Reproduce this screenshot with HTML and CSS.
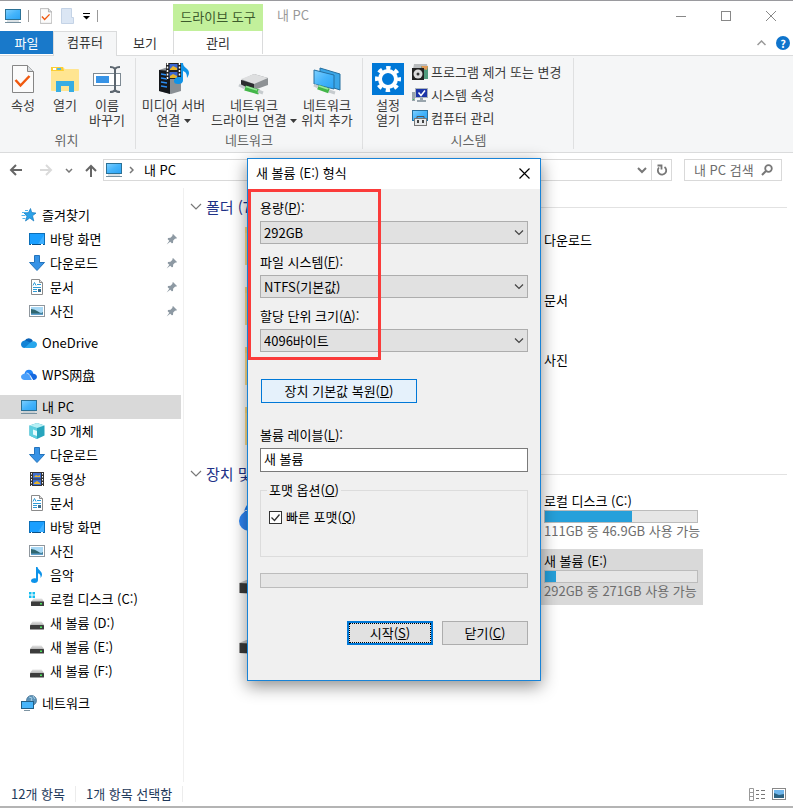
FILE: index.html
```html
<!DOCTYPE html>
<html lang="ko">
<head>
    <meta charset="UTF-8">
    <meta name="viewport" content="width=device-width, initial-scale=1.0">
    <title>내 PC</title>
    <link rel="stylesheet" href="styles.css">
</head>
<body>
    <!-- Shared icons -->
    <svg class="sprite" aria-hidden="true">
        <defs>
            <linearGradient id="screen" x1="0" y1="0" x2="1" y2="1">
                <stop offset="0" stop-color="#7fd0ff"/>
                <stop offset=".5" stop-color="#45b4fb"/>
                <stop offset="1" stop-color="#2aa3f5"/>
            </linearGradient>
            <linearGradient id="steel" x1="0" y1="0" x2="0" y2="1">
                <stop offset="0" stop-color="#e6e6e6"/>
                <stop offset="1" stop-color="#b5b5b5"/>
            </linearGradient>
        </defs>
        <symbol id="pc" viewBox="0 0 16 16">
            <rect x=".5" y="1.5" width="15" height="10" fill="url(#screen)" stroke="#2b7196"/>
            <path d="M2 13h12" stroke="#b7c4cc"/>
            <path d="M0 14.5h16" stroke="#76909f"/>
        </symbol>
        <symbol id="desktop" viewBox="0 0 16 16">
            <rect x=".5" y="2.5" width="15" height="11" fill="#1a9fff" stroke="#0b6fb8"/>
            <path d="M9 13L15 4v9z" fill="#3fb0ff"/>
            <path d="M1 13.5h14" stroke="#084f86"/>
            <path d="M2 13.5h1M12 13.5h2" stroke="#fff"/>
        </symbol>
        <symbol id="download" viewBox="0 0 16 16">
            <path d="M5.5 .5h5v7h5L8 15.5.5 7.5h5z" fill="#3793e6" stroke="#2474bd"/>
        </symbol>
        <symbol id="doc" viewBox="0 0 16 16">
            <path d="M2.500 .5h8l3 3v12h-11z" fill="#fff" stroke="#8b8b8b"/>
            <path d="M10.500 .5v3h3" fill="#ddd" stroke="#8b8b8b"/>
            <path d="M4 6.500l1.500-3 1.500 3M8 5.500h4M4 8.500h8M4 10.500h4M4 12.500h4" fill="none" stroke="#2e9bd6"/>
            <rect x="9" y="10" width="3" height="3" fill="#3a6c8c"/>
        </symbol>
        <symbol id="photo" viewBox="0 0 16 16">
            <rect x=".5" y="2.5" width="15" height="11" fill="#fff" stroke="#8f979e"/>
            <rect x="2" y="4" width="12" height="8" fill="#a8d8f5"/>
            <path d="M2 6q4 0 7 2.500t5 .5v3H2z" fill="#2f6670"/>
            <path d="M2 10.500h12V12H2z" fill="#5fa0cd"/>
        </symbol>
        <symbol id="film" viewBox="0 0 16 16">
            <rect x="1" y="1" width="14" height="14" fill="#333"/>
            <rect x="4" y="2" width="8" height="5.500" fill="#3f6fd0"/>
            <rect x="4" y="8.500" width="8" height="5.500" fill="#3f6fd0"/>
            <path d="M5 6l2-2 2 1 2-1v2zM5 12l3-2 3 2v1H5z" fill="#e7b52c"/>
            <path d="M2.500 2v13M13.500 2v13" stroke="#fff" stroke-dasharray="1.500 1.500"/>
        </symbol>
        <symbol id="cube" viewBox="0 0 16 16">
            <path d="M8 0l7.500 2.500v10L8 16 .5 12.500v-10z" fill="#27a5bd"/>
            <path d="M.5 2.500L8 5v11L.5 12.500z" fill="#5fd0e0"/>
            <path d="M8 0l7.500 2.500L8 5 .5 2.500z" fill="#b6f0f5"/>
            <path d="M4 6.500l4 1.500v5l-4-1.500z" fill="#e4fbfd"/>
        </symbol>
        <symbol id="note" viewBox="0 0 16 16">
            <path d="M7 0h1.500c.5 3 4.500 4 4.500 7.500 0 1.500-.7 2.500-1.500 3.500.5-3-.8-4-2.500-4.700V13c0 1.800-1.500 3-3.500 3S2 15 2 13.700s1.500-2.500 3.500-2.500c.6 0 1 .1 1.500.3z" fill="#0d93ea"/>
        </symbol>
        <symbol id="drive" viewBox="0 0 16 16">
            <path d="M3.500 6.500h9L15 10H1z" fill="url(#steel)"/>
            <rect x="1" y="10" width="14" height="4.500" rx=".5" fill="#3c3c3c"/>
            <rect x="11" y="11.500" width="2" height="1.500" fill="#4be35c"/>
        </symbol>
        <symbol id="sysdrive" viewBox="0 0 16 16">
            <path d="M4.500 7.500h8.500L15 11H2z" fill="url(#steel)"/>
            <rect x="2" y="10.500" width="13" height="4.500" rx=".5" fill="#3c3c3c"/>
            <rect x="11" y="12" width="2" height="1.500" fill="#4be35c"/>
            <path d="M0 1h2.500v2.500H0zM3.500 1H6v2.500H3.500zM0 4.500h2.500V7H0zM3.500 4.500H6V7H3.500z" fill="#13bdf0"/>
        </symbol>
        <symbol id="star" viewBox="0 0 16 16">
            <path d="M9.500 1.500l1.200 4 4.300.6-3.500 2.700 1.300 5.200-4-3-4.300 3L6 9 3 6l4.500-.4z" fill="#2ba2e8" stroke="#1579bd" stroke-width=".7"/>
            <path d="M1 5.500h4M.5 8.500h4M1.500 11.500h3M4 3.500h3" stroke="#4db5ee"/>
        </symbol>
        <symbol id="onedrive" viewBox="0 0 16 16">
            <path d="M3.500 6a4.700 4.700 0 018.500 0L8 11 2.500 9z" fill="#0a62b5"/>
            <path d="M3.500 5.500C1.500 5.800 0 7.500 0 9.300 0 11.500 1.500 13 3.500 13L12 9 6.500 6.200c-1-.6-2-.8-3-.7z" fill="#1183d6"/>
            <path d="M12.500 6.200c2 0 3.500 1.500 3.500 3.400S14.500 13 12.700 13H3.500L10 7z" fill="#27a6ec"/>
        </symbol>
        <symbol id="wps" viewBox="0 0 16 16">
            <path d="M3.500 7C3.800 4.300 5.600 2.800 8 2.800c2.300 0 4 1.600 4.200 4L8.500 9z" fill="#2286f7"/>
            <path d="M5 6.500c2.500 0 4 2.500 6 6.500H3.500C1.500 13 0 11.600 0 9.800 0 8 1.800 6.500 5 6.500z" fill="#4ba0fa"/>
            <path d="M8 7.500c1.500-1.500 7.500-1.500 8 2.300 0 2-1.500 3.200-3.300 3.200H12z" fill="#1468df"/>
            <path d="M5.500 6c2.500.5 4 2.500 6 7" fill="none" stroke="#fff" stroke-width=".8"/>
        </symbol>
        <symbol id="network" viewBox="0 0 16 16">
            <circle cx="10.500" cy="5.500" r="5" fill="#5d93b8" stroke="#3c6c8f" stroke-width=".7"/>
            <path d="M8 2l3 1-1 2.500 3 1.500M12 1l2 3" stroke="#a9cfe4" stroke-width="1" fill="none"/>
            <rect x=".5" y="6.500" width="12" height="7" fill="#47b5fa" stroke="#225f86"/>
            <path d="M3 15.500h6" stroke="#7e95a3"/>
        </symbol>
        <symbol id="pin" viewBox="0 0 12 12">
            <path d="M7 1l4 4-1 .8-.8-.2-2 2L7 10 5.800 10.300 1.700 6.200 2 5l2.500-.2 2-2L6.300 2zM3.500 7.500l1 1-3.800 3z" fill="#8d99a3"/>
        </symbol>
        <symbol id="folder" viewBox="0 0 48 48">
            <path d="M0 10h18l4 4h26v34H0z" fill="#ffd97a"/>
            <path d="M0 16h48v32H0z" fill="#ffdf8c"/>
        </symbol>
        <symbol id="bigdrive" viewBox="0 0 48 48">
            <path d="M0 34L10 30h36l2 5-40 2z" fill="#c4c4c4"/>
            <path d="M0 34l40 2 8-1v9l-8 2L0 44z" fill="#3a3a3a"/>
            <path d="M0 34v10" stroke="#999" stroke-width="2"/>
        </symbol>
        <symbol id="bigcloud" viewBox="0 0 48 48">
            <path d="M4 28C5 14 15 8 24 8s18 8 18 20z" fill="#1f7cf2"/>
            <circle cx="10" cy="32" r="10" fill="#2f86f3"/>
            <path d="M10 22h20l8 20H10z" fill="#4a9cf8"/>
            <path d="M1 25q5-5 12-4" fill="none" stroke="#fff"/>
        </symbol>
        <symbol id="checkdoc" viewBox="0 0 22 28">
            <path d="M.5 .5h15l6 6v21H.5z" fill="#fbfbfb" stroke="#868686"/>
            <path d="M15.500 .5v6h6" fill="#d9dde0" stroke="#868686"/>
            <path d="M3.500 15l5 5.500 9-9.500" fill="none" stroke="#f0590f" stroke-width="2.500"/>
        </symbol>
        <symbol id="caret" viewBox="0 0 7 4">
            <path d="M0 0h7L3.500 4z" fill="currentColor"/>
        </symbol>
    </svg>

    <div class="window">
        <!-- Title bar -->
        <header class="titlebar">
            <div class="quick-access">
                <svg class="icon"><use href="#pc"/></svg>
                <span class="bar"></span>
                <button class="qa-button" aria-label="속성"><svg width="12" height="16"><use href="#checkdoc"/></svg></button>
                <button class="qa-button" aria-label="새 폴더"><svg width="13" height="16"><path d="M.5 .5h10v9h2v6H.5z" fill="#dbe6f4" stroke="#c4d3e6"/></svg></button>
                <button class="qa-button qa-more" aria-label="빠른 실행 도구 모음 사용자 지정"><svg width="7" height="7"><path d="M0 .5h7" stroke="#000"/><path d="M0 3h7L3.500 6.500z"/></svg></button>
                <span class="bar"></span>
            </div>
            <div class="context-title">드라이브 도구</div>
            <div class="title">내 PC</div>
            <div class="window-buttons">
                <button aria-label="최소화"><svg width="10" height="10"><path d="M0 5.500h10" stroke="#888"/></svg></button>
                <button aria-label="최대화"><svg width="10" height="10"><rect x=".5" y=".5" width="9" height="9" fill="none" stroke="#888"/></svg></button>
                <button aria-label="닫기"><svg width="10" height="10"><path d="M0 0l10 10M10 0L0 10" stroke="#888"/></svg></button>
            </div>
        </header>

        <!-- Ribbon tabs -->
        <nav class="tabs">
            <button class="tab tab-file">파일</button>
            <button class="tab tab-active">컴퓨터</button>
            <button class="tab">보기</button>
            <button class="tab tab-context">관리</button>
            <div class="tab-tools">
                <button aria-label="리본 최소화"><svg width="9" height="6"><path d="M.5 5l4-4 4 4" fill="none" stroke="#999" stroke-width="1.500"/></svg></button>
                <button class="help" aria-label="도움말">?</button>
            </div>
        </nav>

        <!-- Ribbon -->
        <section class="ribbon">
            <div class="group group-location">
                <div class="group-items">
                    <button class="big">
                        <svg class="big-icon" viewBox="0 0 32 32"><use href="#checkdoc" x="5" y="2" width="22" height="28"/></svg>
                        속성
                    </button>
                    <button class="big">
                        <svg class="big-icon" viewBox="0 0 32 32">
                            <path d="M3 4h11l2 2h13q1 0 1 1v20q0 1-1 1H3q-1 0-1-1V5q0-1 1-1z" fill="#ffe591"/>
                            <path d="M2 4h12l1 4H2z" fill="#fbce34"/>
                            <rect x="4" y="5" width="3" height="2" fill="#fff"/>
                            <rect x="8" y="5" width="4" height="2" fill="#55b9e3"/>
                            <path d="M7 29V18h18v11h-5v-6h-8v6z" fill="#37ade3"/>
                        </svg>
                        열기
                    </button>
                    <button class="big">
                        <svg class="big-icon" viewBox="0 0 32 32">
                            <rect x="2.500" y="10.500" width="27" height="12" fill="#fff" stroke="#7e8a93"/>
                            <rect x="5" y="13" width="13" height="7" fill="#3793e6"/>
                            <path d="M24 5v24" stroke="#5d6770" stroke-width="2"/>
                            <path d="M19 4q4 0 5 2 1-2 5-2M19 29q4 0 5-2 1 2 5 2" fill="none" stroke="#5d6770" stroke-width="2"/>
                        </svg>
                        이름<br>바꾸기
                    </button>
                </div>
                <div class="group-name">위치</div>
            </div>

            <div class="group group-network">
                <div class="group-items">
                    <button class="big big-media">
                        <svg class="big-icon" viewBox="0 0 32 32">
                            <path d="M1 7l9-3 13 3v21l-10 3-12-3z" fill="#8a8f94"/>
                            <path d="M1 7l11 1v23L1 28z" fill="#15181c"/>
                            <path d="M3 11l6 1M3 15l6 1M3 19l6 1M3 23l6 1" stroke="#2c8cf0" stroke-width="1.500"/>
                            <rect x="8" y="0" width="15" height="16" fill="#222"/>
                            <path d="M9.500 0v16M21.500 0v16" stroke="#fff" stroke-width="1.500" stroke-dasharray="2 1.500"/>
                            <path d="M11.500 1h8v6h-8zM11.500 9h8v6h-8z" fill="#3b66cf"/>
                            <path d="M12 6l3-3 4 2v2h-7zM12 13l3-2 4 2v2h-7z" fill="#e9b52b"/>
                            <path d="M23 0h2c0 5 6 5 6 10 0 2-1 3-2 5 0-4-1-6-4-7v9c0 3-2 4-5 4s-4-1-4-3 2-4 5-4l2 .3z" fill="#0f93e8"/>
                        </svg>
                        미디어 서버<br>연결 <svg class="caret"><use href="#caret"/></svg>
                    </button>
                    <button class="big big-drive">
                        <svg class="big-icon" viewBox="0 0 32 32">
                            <path d="M3 17l13-6 14 4v7l-14 5-13-4z" fill="#8e9295"/>
                            <path d="M3 16l13-5 14 4-14 6z" fill="#dedfe0"/>
                            <path d="M3 17l13 4v6L3 23z" fill="#2c2d2f"/>
                            <path d="M7 25l14 4" stroke="#43b649" stroke-width="5"/>
                            <path d="M8 23.500l11 3.500" stroke="#9be89d" stroke-width="1.500"/>
                            <path d="M1 22l6 3M20 28l5 2" stroke="#c6cbce" stroke-width="3"/>
                        </svg>
                        네트워크<br>드라이브 연결 <svg class="caret"><use href="#caret"/></svg>
                    </button>
                    <button class="big big-place">
                        <svg class="big-icon" viewBox="0 0 32 32">
                            <path d="M9 5l20 6v16l-6-2L9 18z" fill="#3aa6e8" stroke="#256f9f"/>
                            <path d="M3 7l20 5v14L3 21z" fill="url(#screen)" stroke="#256f9f"/>
                            <path d="M7 24l11 4" stroke="#43b649" stroke-width="5"/>
                            <path d="M8 23l9 3" stroke="#9be89d" stroke-width="1.500"/>
                            <path d="M3 22l4 2M18 28l6 2" stroke="#c6cbce" stroke-width="3"/>
                        </svg>
                        네트워크<br>위치 추가
                    </button>
                </div>
                <div class="group-name">네트워크</div>
            </div>

            <div class="group group-system">
                <div class="group-items">
                    <button class="big">
                        <svg class="big-icon" viewBox="0 0 32 32">
                            <rect width="32" height="32" fill="#0078d7"/>
                            <circle cx="16" cy="16" r="11" fill="none" stroke="#fff" stroke-width="4" stroke-dasharray="4.320 4.320" stroke-dashoffset="2.160"/>
                            <circle cx="16" cy="16" r="8" fill="none" stroke="#fff" stroke-width="4"/>
                        </svg>
                        설정<br>열기
                    </button>
                    <div class="small-list">
                        <button class="small">
                            <svg class="icon" viewBox="0 0 16 16">
                                <path d="M2 0h13l1 5H1z" fill="#b9bcbe"/>
                                <path d="M9 2h7v13h-5z" fill="#4f9b7d"/>
                                <path d="M9 2h7l-1 4-4-1z" fill="#e39a55"/>
                                <rect y="4" width="12" height="12" fill="#222"/>
                                <circle cx="6" cy="10" r="4.500" fill="#dcdcdc"/>
                                <circle cx="6" cy="10" r="1.500" fill="#333"/>
                            </svg>
                            프로그램 제거 또는 변경
                        </button>
                        <button class="small">
                            <svg class="icon" viewBox="0 0 16 16">
                                <rect y="5" width="3" height="9" fill="#9aa5ad"/>
                                <rect x="3.500" y="1.500" width="12" height="9" fill="#1c35a8" stroke="#aab4bc"/>
                                <path d="M6.500 5.500l2.500 3 4-5" fill="none" stroke="#fff" stroke-width="1.500"/>
                                <path d="M8 11h3v2H8zM5 13h9v2H5z" fill="#9aa5ad"/>
                                <path d="M1 12.500h1" stroke="#33d04b"/>
                            </svg>
                            시스템 속성
                        </button>
                        <button class="small">
                            <svg class="icon" viewBox="0 0 16 16">
                                <rect x=".5" y=".5" width="15" height="10" fill="url(#screen)" stroke="#256f9f"/>
                                <path d="M5 9V6.500h7V9" fill="none" stroke="#555"/>
                                <rect x="2.500" y="8.500" width="12" height="7" fill="#e8eaeb" stroke="#777"/>
                                <path d="M5 10h2v3H5zM10 10h2v3h-2z" fill="#444"/>
                            </svg>
                            컴퓨터 관리
                        </button>
                    </div>
                </div>
                <div class="group-name">시스템</div>
            </div>
        </section>

        <!-- Address bar -->
        <div class="navbar">
            <div class="nav-buttons">
                <button aria-label="뒤로"><svg width="14" height="12"><path d="M13 6H2M7 1L2 6l5 5" fill="none" stroke="#666" stroke-width="2"/></svg></button>
                <button aria-label="앞으로"><svg width="14" height="12"><path d="M1 6h11M7 1l5 5-5 5" fill="none" stroke="#dadada" stroke-width="2"/></svg></button>
                <button class="nav-recent" aria-label="최근 위치"><svg width="8" height="5"><path d="M1 1l3 3 3-3" fill="none" stroke="#777" stroke-width="1.500"/></svg></button>
                <button aria-label="위로"><svg width="12" height="13"><path d="M6 13V2M1 7l5-5 5 5" fill="none" stroke="#666" stroke-width="2"/></svg></button>
            </div>
            <div class="address">
                <svg class="icon"><use href="#pc"/></svg>
                <svg width="5" height="8"><path d="M1 1l3 3-3 3" fill="none" stroke="#777" stroke-width="1.500"/></svg>
                <span class="crumb">내 PC</span>
                <button aria-label="이전 위치"><svg width="10" height="7"><path d="M1 1l4 4 4-4" fill="none" stroke="#777" stroke-width="2"/></svg></button>
                <button class="refresh" aria-label="새로 고침"><svg width="12" height="12" viewBox="0 0 12 12"><path d="M8.500 3A4.200 4.200 0 113 3.500" fill="none" stroke="#777" stroke-width="1.800"/><path d="M1.500 1.500H5.500v4" fill="none" stroke="#777" stroke-width="1.800"/></svg></button>
            </div>
            <div class="search">
                <input type="text" placeholder="내 PC 검색" aria-label="내 PC 검색">
                <svg width="12" height="12"><circle cx="7.500" cy="4.500" r="3.300" fill="none" stroke="#777" stroke-width="1.800"/><path d="M5 7l-4 4" stroke="#777" stroke-width="2"/></svg>
            </div>
        </div>

        <div class="main">
            <!-- Navigation pane -->
            <nav class="sidebar">
                <div class="tree">
                    <a href="#"><svg class="icon"><use href="#star"/></svg>즐겨찾기</a>
                    <a href="#" class="child"><svg class="icon"><use href="#desktop"/></svg>바탕 화면<svg class="pin"><use href="#pin"/></svg></a>
                    <a href="#" class="child"><svg class="icon"><use href="#download"/></svg>다운로드<svg class="pin"><use href="#pin"/></svg></a>
                    <a href="#" class="child"><svg class="icon"><use href="#doc"/></svg>문서<svg class="pin"><use href="#pin"/></svg></a>
                    <a href="#" class="child"><svg class="icon"><use href="#photo"/></svg>사진<svg class="pin"><use href="#pin"/></svg></a>
                </div>
                <div class="tree">
                    <a href="#"><svg class="icon"><use href="#onedrive"/></svg>OneDrive</a>
                </div>
                <div class="tree">
                    <a href="#"><svg class="icon"><use href="#wps"/></svg>WPS网盘</a>
                </div>
                <div class="tree">
                    <a href="#" class="selected"><svg class="icon"><use href="#pc"/></svg>내 PC</a>
                    <a href="#" class="child"><svg class="icon"><use href="#cube"/></svg>3D 개체</a>
                    <a href="#" class="child"><svg class="icon"><use href="#download"/></svg>다운로드</a>
                    <a href="#" class="child"><svg class="icon"><use href="#film"/></svg>동영상</a>
                    <a href="#" class="child"><svg class="icon"><use href="#doc"/></svg>문서</a>
                    <a href="#" class="child"><svg class="icon"><use href="#desktop"/></svg>바탕 화면</a>
                    <a href="#" class="child"><svg class="icon"><use href="#photo"/></svg>사진</a>
                    <a href="#" class="child"><svg class="icon"><use href="#note"/></svg>음악</a>
                    <a href="#" class="child"><svg class="icon"><use href="#sysdrive"/></svg>로컬 디스크 (C:)</a>
                    <a href="#" class="child"><svg class="icon"><use href="#drive"/></svg>새 볼륨 (D:)</a>
                    <a href="#" class="child"><svg class="icon"><use href="#drive"/></svg>새 볼륨 (E:)</a>
                    <a href="#" class="child"><svg class="icon"><use href="#drive"/></svg>새 볼륨 (F:)</a>
                </div>
                <div class="tree">
                    <a href="#"><svg class="icon"><use href="#network"/></svg>네트워크</a>
                </div>
            </nav>

            <!-- Folders and drives -->
            <main class="content">
                <h2 class="section-title"><svg width="12" height="8"><path d="M1 1l5 5 5-5" fill="none" stroke="#777" stroke-width="1.200"/></svg>폴더 (7)</h2>
                <div class="tiles folders">
                    <div class="tile"><svg class="tile-icon"><use href="#folder"/></svg></div>
                    <div class="tile"><span class="tile-text">다운로드</span></div>
                    <div class="tile"><svg class="tile-icon"><use href="#folder"/></svg></div>
                    <div class="tile"><span class="tile-text">문서</span></div>
                    <div class="tile"><svg class="tile-icon"><use href="#folder"/></svg></div>
                    <div class="tile"><span class="tile-text">사진</span></div>
                    <div class="tile"><svg class="tile-icon"><use href="#folder"/></svg></div>
                </div>

                <h2 class="section-title"><svg width="12" height="8"><path d="M1 1l5 5 5-5" fill="none" stroke="#777" stroke-width="1.200"/></svg>장치 및</h2>
                <div class="tiles drives">
                    <div class="tile"><svg class="tile-icon"><use href="#bigcloud"/></svg></div>
                    <div class="tile">
                        <div class="tile-text">
                            <div>로컬 디스크 (C:)</div>
                            <div class="usage"><div class="used" style="width: 57%"></div></div>
                            <div class="free">111GB 중 46.9GB 사용 가능</div>
                        </div>
                    </div>
                    <div class="tile"><svg class="tile-icon"><use href="#bigdrive"/></svg></div>
                    <div class="tile tile-selected">
                        <div class="tile-text">
                            <div>새 볼륨 (E:)</div>
                            <div class="usage"><div class="used" style="width: 7%"></div></div>
                            <div class="free">292GB 중 271GB 사용 가능</div>
                        </div>
                    </div>
                    <div class="tile"><svg class="tile-icon"><use href="#bigdrive"/></svg></div>
                </div>
            </main>
        </div>

        <!-- Status bar -->
        <footer class="statusbar">
            <span>12개 항목</span>
            <span>1개 항목 선택함</span>
            <div class="views">
                <button aria-label="자세히"><svg width="16" height="13"><path d="M.5 .5h4v12h-4zM.5 4.500h4M.5 8.500h4" fill="none" stroke="#999"/><path d="M7 2.500h3M12 2.500h4M7 6.500h3M12 6.500h4M7 10.500h3M12 10.500h4" stroke="#777"/></svg></button>
                <button aria-label="큰 아이콘"><svg width="14" height="12"><rect x=".5" y=".5" width="13" height="11" fill="#fff" stroke="#888"/><rect x="2" y="2" width="10" height="8" fill="#6fb6ec"/><path d="M2 5l5 2 5-1v4H2z" fill="#2d6382"/></svg></button>
            </div>
        </footer>
    </div>

    <!-- Format dialog -->
    <form class="dialog" role="dialog" aria-label="새 볼륨 (E:) 형식">
        <div class="dialog-title">
            <span>새 볼륨 (E:) 형식</span>
            <button type="button" aria-label="닫기"><svg width="11" height="11"><path d="M.5 .5l10 10M10.500 .5l-10 10" stroke="#000" stroke-width="1.200"/></svg></button>
        </div>
        <div class="dialog-body">
            <div class="field">
                <label for="capacity">용량(<u>P</u>):</label>
                <select id="capacity"><option>292GB</option></select>
            </div>
            <div class="field">
                <label for="filesystem">파일 시스템(<u>F</u>):</label>
                <select id="filesystem"><option>NTFS(기본값)</option></select>
            </div>
            <div class="field">
                <label for="unit">할당 단위 크기(<u>A</u>):</label>
                <select id="unit"><option>4096바이트</option></select>
            </div>
            <button type="button" class="restore">장치 기본값 복원(<u>D</u>)</button>
            <div class="field">
                <label for="volume">볼륨 레이블(<u>L</u>):</label>
                <input type="text" id="volume" value="새 볼륨">
            </div>
            <fieldset>
                <legend>포맷 옵션(<u>O</u>)</legend>
                <div class="check">
                    <input type="checkbox" id="quick" checked>
                    <label for="quick">빠른 포맷(<u>Q</u>)</label>
                </div>
            </fieldset>
            <progress value="0" max="100" aria-label="포맷 진행률"></progress>
            <div class="dialog-buttons">
                <button type="button" class="start">시작(<u>S</u>)</button>
                <button type="button">닫기(<u>C</u>)</button>
            </div>
        </div>
        <div class="highlight"></div>
    </form>
</body>
</html>
```

FILE: styles.css
```css
* {
    margin: 0;
    padding: 0;
    box-sizing: border-box;
}

body {
    position: relative;
    background-color: #fff;
    color: #000;
    font-family: "Noto Sans CJK KR", "Noto Sans CJK SC", sans-serif;
    font-size: 13px;
    line-height: 20px;
}

button,
input,
select {
    font: inherit;
    color: inherit;
}

button {
    background: none;
    border: none;
}

svg {
    display: block;
    flex-shrink: 0;
}

.sprite {
    position: absolute;
    width: 0;
    height: 0;
}

.icon {
    width: 16px;
    height: 16px;
}

.window {
    display: flex;
    flex-direction: column;
    min-height: 100vh;
    border-top: 1px solid #9a9a9e;
    border-bottom: 2px solid #b4b4b4;
}

/* Title bar */
.titlebar {
    display: flex;
    height: 30px;
}

.quick-access {
    display: flex;
    align-items: center;
    width: 173px;
    padding-left: 5px;
}

.quick-access .bar {
    width: 1px;
    height: 12px;
    margin: 0 7px;
    background-color: #999;
}

.qa-button {
    margin-left: 4px;
    margin-right: 5px;
}

.qa-more {
    margin-right: 0;
}

.context-title {
    width: 90px;
    margin-top: 3px;
    background-color: #c2f09b;
    color: #3c5a2c;
    line-height: 25px;
    text-align: center;
}

.title {
    flex: 1;
    padding-left: 14px;
    color: #999;
    line-height: 28px;
}

.window-buttons {
    display: flex;
}

.window-buttons button {
    display: flex;
    align-items: center;
    justify-content: center;
    width: 45px;
}

/* Tabs */
.tabs {
    display: flex;
    height: 25px;
    border-bottom: 1px solid #dadbdc;
}

.tab {
    width: 56px;
    height: 23px;
    color: #333;
    line-height: 20px;
}

.tab-file {
    width: 53px;
    background-color: #1979ca;
    color: #fff;
}

.tab-active {
    width: 64px;
    height: 25px;
    padding-bottom: 4px;
    background-color: #f5f6f7;
    border: 1px solid #dadbdc;
    border-bottom: none;
}

.tab-context {
    width: 90px;
    border-left: 1px solid #dadbdc;
    border-right: 1px solid #dadbdc;
}

.tab-tools {
    display: flex;
    align-items: center;
    gap: 10px;
    margin-left: auto;
    padding-right: 3px;
}

.help {
    width: 14px;
    height: 14px;
    border-radius: 50%;
    background-color: #0f74cc;
    color: #fff;
    font-size: 11px;
    font-weight: bold;
    line-height: 14px;
}

/* Ribbon */
.ribbon {
    display: flex;
    height: 97px;
    padding: 2px 0 3px;
    background-color: #f5f6f7;
    border-bottom: 1px solid #dadbdc;
}

.group {
    display: flex;
    flex-direction: column;
    border-right: 1px solid #dfe0e1;
}

.group-location {
    width: 136px;
    padding-left: 2px;
}

.group-network {
    width: 227px;
}

.group-system {
    width: 211px;
    padding-left: 1px;
}

.group-items {
    display: flex;
    flex: 1;
}

.group-name {
    height: 17px;
    color: #666;
    line-height: 16px;
    text-align: center;
}

.group-location .group-name {
    padding-right: 4px;
}

.big {
    align-self: flex-start;
    width: 42px;
    padding-top: 5px;
    color: #3b3b3b;
    line-height: 15px;
    white-space: nowrap;
}

.group-system .big {
    width: 48px;
}

.big-media {
    width: 75px;
}

.big-drive {
    width: 86px;
}

.big-place {
    width: 60px;
}

.big-icon {
    width: 32px;
    height: 32px;
    margin: 0 auto 2px;
}

.caret {
    display: inline-block;
    width: 7px;
    height: 4px;
    vertical-align: middle;
}

.small-list {
    display: flex;
    flex-direction: column;
    padding-top: 2px;
}

.small {
    display: flex;
    align-items: center;
    gap: 3px;
    height: 23px;
    color: #3b3b3b;
}

/* Address bar */
.navbar {
    display: flex;
    height: 35px;
    padding: 6px 11px 7px 9px;
    gap: 12px;
}

.nav-buttons {
    display: flex;
    align-items: center;
    gap: 16px;
    margin-right: -6px;
}

.nav-buttons .nav-recent {
    margin: 0 -4px;
}

.address {
    display: flex;
    flex: 1;
    align-items: center;
    padding-left: 2px;
    border: 1px solid #d9d9d9;
    gap: 7px;
}

.crumb {
    flex: 1;
    padding-left: 3px;
}

.address .refresh {
    display: flex;
    align-items: center;
    width: 20px;
    height: 20px;
    padding-left: 4px;
    border-left: 1px solid #d9d9d9;
    margin-left: -3px;
}

.search {
    display: flex;
    align-items: center;
    width: 98px;
    padding: 0 8px 0 9px;
    border: 1px solid #d9d9d9;
}

.search input {
    flex: 1;
    min-width: 0;
    border: none;
    outline: none;
}

.search input::placeholder {
    color: #6d6d6d;
}

/* Navigation pane */
.main {
    display: flex;
    flex: 1;
}

.sidebar {
    width: 184px;
    padding: 15px 2px 0 0;
    border-right: 1px solid #f0f0f0;
}

.tree {
    margin-bottom: 8px;
}

.tree a {
    display: flex;
    align-items: center;
    gap: 5px;
    height: 24px;
    padding: 0 3px 0 21px;
    color: #000;
    text-decoration: none;
}

.tree .child {
    padding-left: 29px;
}

.tree .selected {
    background-color: #d9d9d9;
}

.pin {
    width: 12px;
    height: 12px;
    margin-left: auto;
}

/* Content */
.content {
    flex: 1;
    padding: 9px 6px 0 6px;
}

.section-title {
    display: flex;
    align-items: center;
    gap: 4px;
    color: #1e3287;
    font-size: 15px;
    font-weight: normal;
    line-height: 20px;
}

/* Rule that fills the rest of the header row */
.section-title::after {
    content: "";
    flex: 1;
    height: 1px;
    margin-left: 6px;
    background-color: #e2e2e2;
}

.tiles {
    display: grid;
    grid-template-columns: 255px 215px;
    padding-left: 43px;
}

.folders {
    grid-auto-rows: 46px;
    row-gap: 14px;
    margin-bottom: 21px;
}

.drives {
    grid-auto-rows: 56px;
    row-gap: 4px;
    margin-top: 5px;
}

.tile-icon {
    width: 48px;
    height: 48px;
}

.folders .tile-icon {
    margin-left: 12px;
}

.drives .tile-icon {
    margin-left: 6px;
}

.tile-text {
    display: block;
    padding: 0 5px 0 56px;
}

.folders .tile-text {
    line-height: 46px;
}

.drives .tile-text {
    padding-top: 2px;
    line-height: 19px;
    white-space: nowrap;
}

.tile-selected {
    background-color: #d9d9d9;
}

.usage {
    height: 13px;
    background-color: #e6e6e6;
    border: 1px solid #bcbcbc;
}

.used {
    height: 100%;
    background-color: #26a0da;
}

.free {
    color: #6d6d6d;
    line-height: 16px;
}

/* Status bar */
.statusbar {
    display: flex;
    align-items: center;
    height: 24px;
    padding: 0 7px 0 11px;
    color: #1e395b;
}

.statusbar span {
    padding-right: 10px;
    margin-right: 10px;
    border-right: 1px solid #ececec;
    line-height: 16px;
}

.views {
    display: flex;
    gap: 7px;
    margin-left: auto;
}

/* Format dialog */
.dialog {
    position: absolute;
    top: 158px;
    left: 247px;
    width: 294px;
    background-color: #f0f0f0;
    border: 1px solid #1883d7;
    box-shadow: 0 5px 16px rgba(0, 0, 0, 0.45);
}

.dialog-title {
    display: flex;
    align-items: center;
    justify-content: space-between;
    height: 30px;
    padding: 0 10px 2px 8px;
    background-color: #fff;
}

.dialog-body {
    padding: 9px 12px 35px;
}

.field {
    margin-bottom: 8px;
}

.field label {
    display: block;
    margin-bottom: 3px;
}

.field select,
.field input {
    display: block;
    width: 100%;
    height: 23px;
    padding: 0 3px;
    border: 1px solid #adadad;
    border-radius: 0;
}

.field select {
    appearance: none;
    background: #e1e1e1 url("data:image/svg+xml,%3Csvg xmlns='http://www.w3.org/2000/svg' width='10' height='6'%3E%3Cpath d='M1 .5l4 4 4-4' fill='none' stroke='%23444' stroke-width='1.200'/%3E%3C/svg%3E") no-repeat right 3px center;
}

.field input {
    height: 24px;
    padding-bottom: 3px;
    background-color: #fff;
    border-color: #7a7a7a;
}

.dialog-body button {
    height: 24px;
    background-color: #e1e1e1;
    border: 1px solid #adadad;
    line-height: 20px;
}

.dialog-body .restore {
    display: block;
    width: 156px;
    margin: 27px 0 22px 1px;
    background-color: #e5f1fb;
    border-color: #0078d7;
}

fieldset {
    height: 77px;
    padding: 7px 8px;
    border: 1px solid #dcdcdc;
}

legend {
    padding: 0 2px;
    margin-left: -2px;
}

.check {
    display: flex;
    align-items: center;
    gap: 4px;
}

.check input {
    appearance: none;
    width: 13px;
    height: 13px;
    background: #fff url("data:image/svg+xml,%3Csvg xmlns='http://www.w3.org/2000/svg' width='11' height='11'%3E%3Cpath d='M1.500 5.500l3 3 5-6' fill='none' stroke='%23333' stroke-width='1.300'/%3E%3C/svg%3E") no-repeat center;
    border: 1px solid #333;
}

progress {
    appearance: none;
    display: block;
    width: 100%;
    height: 15px;
    margin-top: 16px;
    background-color: #e6e6e6;
    border: 1px solid #bcbcbc;
}

progress::-webkit-progress-bar {
    background-color: #e6e6e6;
}

.dialog-buttons {
    display: flex;
    justify-content: flex-end;
    gap: 9px;
    margin-top: 33px;
}

.dialog-buttons button {
    width: 86px;
}

.dialog-buttons .start {
    border: 2px solid #0078d7;
    outline: 1px dotted #000;
    outline-offset: -3px;
    line-height: 18px;
}

/* Red frame over the three drop-downs */
.highlight {
    position: absolute;
    top: 30px;
    left: 0;
    width: 133px;
    height: 171px;
    border: 3px solid #fb3b3a;
    pointer-events: none;
}
```
